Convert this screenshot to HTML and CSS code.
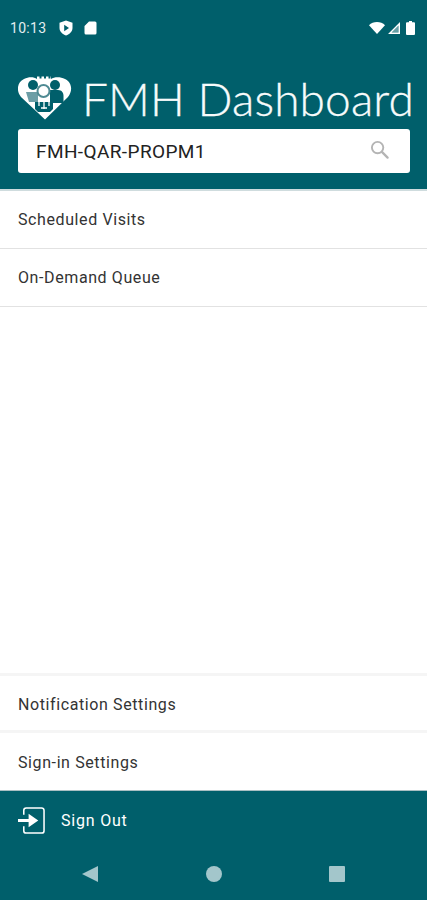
FILE: index.html
```html
<!DOCTYPE html>
<html lang="en">
<head>
<meta charset="utf-8">
<title>FMH Dashboard</title>
<link rel="stylesheet" href="styles.css">
</head>
<body>
<div class="app">
  <header class="header">
    <div class="status">
      <div class="status-group">
        <span class="time">10:13</span>
        <svg class="ic-shield" viewBox="0 0 14 16"><path fill="#fff" d="M7 0.500 13.500 2.800V8c0 3.600-2.800 6.200-6.500 7.500C3.300 14.200.5 11.600.5 8V2.800Z"/><path fill="#005f6b" d="M5.200 4.800 10 8l-4.800 3.200Z"/></svg>
        <svg class="ic-sd" viewBox="0 0 13 14"><path fill="#fff" d="M5 0.500H11a1.500 1.500 0 0 1 1.500 1.500V12a1.500 1.500 0 0 1-1.500 1.500H2A1.500 1.500 0 0 1 .5 12V5Z"/></svg>
      </div>
      <div class="status-group right">
        <svg class="ic-wifi" viewBox="0 0 16 12"><path fill="#fff" d="M0 3.200C2 1.200 5 0 8 0s6 1.200 8 3.200L8 12Z"/></svg>
        <svg class="ic-signal" viewBox="0 0 12 12"><path fill="#fff" d="M12 0V12H0ZM10.500 3.600 3.600 10.500H10.500Z"/><path fill="#fff" opacity=".4" d="M10.500 3.600 3.600 10.500H10.500Z"/></svg>
        <svg class="ic-battery" viewBox="0 0 9 14"><path fill="#fff" d="M3 0H6V1.200H8a1 1 0 0 1 1 1V13a1 1 0 0 1-1 1H1a1 1 0 0 1-1-1V2.200a1 1 0 0 1 1-1H3Z"/></svg>
      </div>
    </div>
    <div class="brand">
      <svg class="logo" viewBox="0 0 54 44">
        <path fill="#fff" d="M27 43.500 3 21C-2 15-1 6 6 3c5-2.500 10-2 13 0V.5h2.500v2h2v-2h2.500v2h2v-2h2.500v2h2V.5H33V3c3-2 9-2.500 14 0 7 3 8 12 3 18Z"/>
        <circle cx="15" cy="9" r="5" fill="#005f6b"/>
        <circle cx="37" cy="9" r="5" fill="#005f6b"/>
        <path fill="#005f6b" d="M32 14h8c4 0 5.500 3 5.500 6v7H32Z"/>
        <path fill="#6d9ea6" d="M8 16h11l1 2v8h-9Z"/>
        <circle cx="25.500" cy="15" r="6" fill="#fff" stroke="#4f8a93" stroke-width="2"/>
        <path fill="#005f6b" d="M17 26h18v7l-3 3H20l-3-3Z"/>
        <path fill="none" stroke="#fff" stroke-width="1.300" d="M21 25v5M31 25v5M26 25v8M23 32h6"/>
      </svg>
      <h1 class="title">FMH Dashboard</h1>
    </div>
    <div class="search">
      <span class="search-text">FMH-QAR-PROPM1</span>
      <svg class="ic-search" viewBox="0 0 20 20"><circle cx="8" cy="8" r="6" fill="none" stroke="#b4b4b4" stroke-width="2"/><path stroke="#b4b4b4" stroke-width="2.400" stroke-linecap="round" d="m12.800 12.800 5.700 5.700"/></svg>
    </div>
  </header>
  <main class="content">
    <nav class="list">
      <a class="row ruled">Scheduled Visits</a>
      <a class="row ruled">On-Demand Queue</a>
    </nav>
    <nav class="list settings">
      <a class="row">Notification Settings</a>
      <a class="row">Sign-in Settings</a>
    </nav>
  </main>
  <footer class="footer">
    <div class="signout">
      <svg class="ic-signout" viewBox="0 0 28 28"><path fill="none" stroke="#fff" stroke-width="1.600" d="M6 8V3.500A2.500 2.500 0 0 1 8.500 1H24.500A2.500 2.500 0 0 1 27 3.500V24.500A2.500 2.500 0 0 1 24.500 27H8.500A2.500 2.500 0 0 1 6 24.500V20"/><path fill="#fff" d="M0 12.500H11V7L21 14 11 21V15.500H0Z"/></svg>
      <span>Sign Out</span>
    </div>
    <div class="nav">
      <svg class="ic-back" viewBox="0 0 16 16"><path fill="#a3c6cb" d="M16 0V16L0 8Z"/></svg>
      <svg class="ic-home" viewBox="0 0 16 16"><circle cx="8" cy="8" r="8" fill="#a3c6cb"/></svg>
      <svg class="ic-recent" viewBox="0 0 16 16"><rect width="16" height="16" rx="1" fill="#a3c6cb"/></svg>
    </div>
  </footer>
</div>
</body>
</html>
```

FILE: styles.css
```css
* { box-sizing: border-box; }
html, body { margin: 0; padding: 0; }
body { background: #fff; font-family: Roboto, "Liberation Sans", sans-serif; }
.app { width: 427px; height: 900px; display: flex; flex-direction: column; overflow: hidden; }

.header { height: 191px; flex: none; background: #005f6b; border-bottom: 2px solid #cfdcde; padding: 0 18px; display: flex; flex-direction: column; }
.status { height: 56px; flex: none; margin: 0 -6px 0 -8px; display: flex; justify-content: space-between; align-items: center; }
.status-group { display: flex; align-items: center; }
.time { font-size: 14px; color: #e3eef0; margin-right: 13px; letter-spacing: .3px; }
.ic-shield { width: 14px; height: 16px; margin-right: 11px; }
.ic-sd { width: 13px; height: 14px; }
.status-group.right { gap: 3px; }
.ic-wifi { width: 16px; height: 12px; }
.ic-signal { width: 12px; height: 12px; }
.ic-battery { width: 9px; height: 14px; margin-left: 3px; }

.brand { display: flex; align-items: center; height: 73px; flex: none; }
.logo { width: 54px; height: 44px; flex: none; margin-top: 10px; }
.title { margin: 12px 0 0 10px; font-family: Lato, sans-serif; font-weight: 300; font-size: 46px; line-height: 1; letter-spacing: .15px; color: #f7fbfb; white-space: nowrap; -webkit-text-stroke: .3px #f7fbfb; }

.search { height: 44px; width: 392px; flex: none; background: #fff; border-radius: 3px; display: flex; align-items: center; justify-content: space-between; padding: 0 21px 3px 18px; }
.search-text { font-size: 19px; letter-spacing: .4px; color: #222; margin-top: 3px; }
.ic-search { width: 19px; height: 19px; }

.content { flex: 1; display: flex; flex-direction: column; justify-content: space-between; }
.list { display: flex; flex-direction: column; }
.row { height: 58px; display: flex; align-items: center; padding-left: 18px; font-size: 16px; letter-spacing: .6px; color: #333; }
.ruled { border-bottom: 1px solid #e2e2e2; }
.settings { border-top: 3px solid #f5f5f5; }
.settings .row { height: 57px; padding-top: 2px; }
.settings .row:first-child { border-bottom: 3px solid #f5f5f5; }

.footer { height: 110px; flex: none; background: #005f6b; border-top: 1px solid #a9bfc3; display: flex; flex-direction: column; }
.signout { height: 58px; flex: none; display: flex; align-items: center; padding-left: 18px; color: #fff; font-size: 16px; letter-spacing: .8px; gap: 16px; }
.ic-signout { width: 27px; height: 27px; }
.nav { flex: 1; display: flex; align-items: center; justify-content: space-between; padding: 0 82px 1px 82px; }
.ic-back { width: 16px; height: 16px; }
.ic-home { width: 16px; height: 16px; }
.ic-recent { width: 16px; height: 16px; }
```
